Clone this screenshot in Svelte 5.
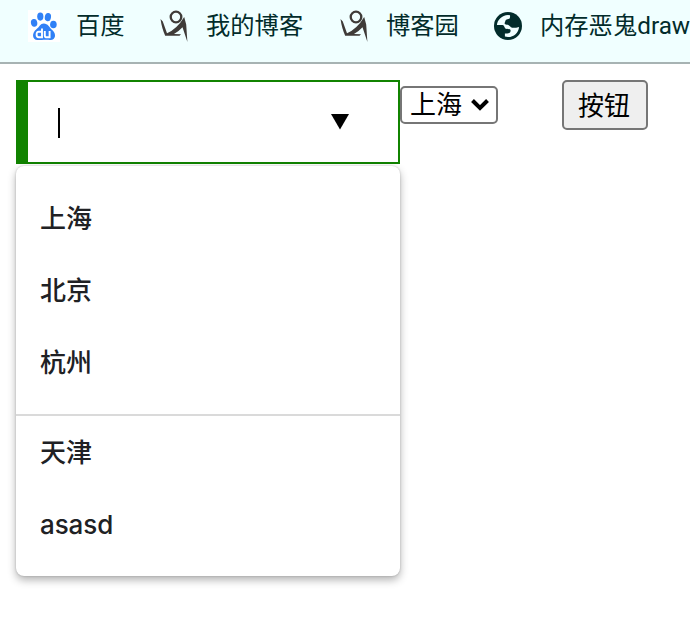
<script>
  const first = ['上海', '北京', '杭州'];
  const second = ['天津', 'asasd'];
</script>

{#snippet blogIcon()}
  <svg class="blog" width="30" height="34" viewBox="0 0 30 34">
    <circle cx="17" cy="8" r="5.3" fill="none" stroke="#3f3b38" stroke-width="2.3" />
    <path fill="#3f3b38" d="M1.5 10 3.8 12.5 8 24.2Q18 20 25.2 8L27.2 15.5 28.4 33 23.5 18.2Q19 23 15 25L22 25.2 20.5 26.8 6.2 26.7Q3 20 1.5 10Z" />
  </svg>
{/snippet}

<div class="page">
  <nav class="bookmarks">
    <a class="baidu"><svg width="32" height="32" viewBox="0 0 32 32">
      <rect width="32" height="32" fill="#fff" />
      <g fill="#3180f6">
        <ellipse cx="12.3" cy="6.6" rx="3.1" ry="4.1" />
        <ellipse cx="19.9" cy="7.1" rx="3.1" ry="4.1" transform="rotate(10 19.9 7.1)" />
        <ellipse cx="6.1" cy="12.8" rx="3.2" ry="3.9" transform="rotate(-10 6.1 12.8)" />
        <ellipse cx="25.4" cy="14.5" rx="3.3" ry="3.8" />
        <path d="M15.8 13.5C12.2 13.5 11.4 17 8.4 19.2 3.5 22.7 4.1 30 9.5 30 13 30 19 29.4 22 30 27.7 30.4 28.6 24 24.5 20.3 21.1 17.3 20 13.5 15.8 13.5Z" />
      </g>
      <g fill="none" stroke="#fff" stroke-width="1.9">
        <path d="M14 18.5V27.3H10.8Q8.6 27.3 8.6 24.5T10.8 21.8H14M16.8 21V25.4Q16.8 27.3 19 27.3H21.6V21" />
      </g>
    </svg><span>百度</span></a>
    <a class="mine">{@render blogIcon()}<span>我的博客</span></a>
    <a class="garden">{@render blogIcon()}<span>博客园</span></a>
    <a class="draw"><svg width="28" height="28" viewBox="0 0 28 28">
      <circle cx="14" cy="14" r="14" fill="#022c2b" />
      <path fill="#f0ffff" d="M2.9 13.1C3.3 7.7 8 3.1 14 2.9L16 3.3C16.3 6 15.7 7.2 13.4 7.3 11.2 7.4 11.6 9.5 10.8 10.6 10.2 12 11.3 12.8 12.8 12.8 15 12.8 15.6 14 17 15.2 18.5 16.2 21.5 15.8 25.1 14.9C24.5 20.7 20 25 14 25L10.9 24.6V21.5C13.5 21.5 16.4 21.8 16.6 18.8 16.8 16.7 13.5 17.3 12 16.8 10.3 16.2 10.5 13.3 8.5 13.1Z" />
    </svg><span>内存恶鬼draw</span></a>
  </nav>

  <main>
    <div class="field">
      <div class="combo"><i class="caret"></i><svg width="18" height="16" viewBox="0 0 18 16"><path d="M0 0H18L9 15.5Z" /></svg></div>
      <div class="menu">
        <div class="group">{#each first as item}<div class="item">{item}</div>{/each}</div>
        <div class="group">{#each second as item}<div class="item">{item}</div>{/each}</div>
      </div>
    </div>
    <div class="select"><span>上海</span><svg width="18" height="12" viewBox="0 0 18 12"><path d="M1.5 1.5 9 9 16.5 1.5" fill="none" stroke="#000" stroke-width="4" /></svg></div>
    <button>按钮</button>
  </main>
</div>

<style>
  :global(body) { overflow: hidden; background: #fff; }
  .page { width: 690px; height: 622px; overflow: hidden; font-family: Inter, "Noto Sans CJK SC", sans-serif; }
  .bookmarks { box-sizing: border-box; height: 64px; background: #f0ffff; border-bottom: 2px solid #a7b3b3; display: flex; padding-left: 28px; }
  a { display: flex; align-items: center; height: 52px; flex: none; color: #022c2b; font: 24.3px/36px Roboto, "Noto Sans CJK SC", sans-serif; white-space: nowrap; }
  a svg { flex: none; }
  .baidu { width: 131px; gap: 16px; }
  .mine { width: 180px; gap: 17px; }
  .garden { width: 155px; gap: 17px; }
  .draw { gap: 18px; }
  main { display: flex; align-items: flex-start; padding: 16px 0 0 16px; }
  .field { width: 384px; }
  .combo { box-sizing: border-box; height: 84px; border: 2px solid #118300; border-left-width: 12px; display: flex; align-items: center; justify-content: space-between; padding: 0 49px 0 30px; }
  .caret { width: 2px; height: 30px; margin-top: 2px; background: #000; }
  .menu { margin-top: 2px; height: 410px; border-radius: 8px; box-shadow: 0 4px 8px rgba(0,0,0,.3), 0 0 2px rgba(0,0,0,.22); background: #fff; }
  .group { padding: 16px 0; }
  .group + .group { border-top: 2px solid #dadada; padding-top: 0; }
  .item { height: 72px; padding-left: 24px; font-family: Inter, "Noto Sans CJK SC", sans-serif; font-size: 26px; line-height: 74px; font-weight: 500; color: #202124; }
  .item:last-child { letter-spacing: -0.1px; }
  .select { box-sizing: border-box; width: 98px; height: 38px; margin-top: 6px; border: 2px solid #767676; border-radius: 5px; display: flex; align-items: center; padding-left: 8px; gap: 9px; font-size: 26px; line-height: 34px; }
  button { box-sizing: border-box; width: 86px; height: 50px; margin: 0 0 0 64px; padding: 0 2px 3px 0; border: 2px solid #767676; border-radius: 5px; background: #efefef; color: #000; font: 26px/43px "Noto Sans CJK SC", sans-serif; }
</style>
